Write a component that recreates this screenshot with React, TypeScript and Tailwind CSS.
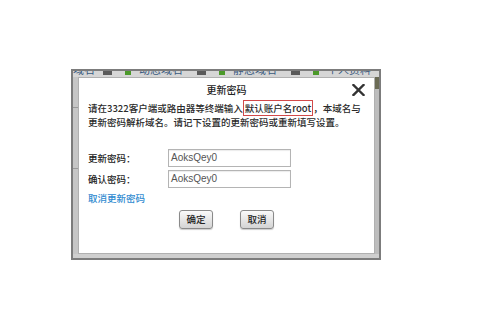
import React from 'react';

const cjk = "font-['Noto_Sans_CJK_SC','Noto_Sans',sans-serif]";

const TabStrip = () => {
  const tabs = ['动态域名', '静态域名', '个人资料'];
  return (
    <div className="h-[6px] overflow-hidden bg-[#d6d6d6]">
      <div className={`flex items-center h-[14px] mt-[-9px] text-[11px] leading-[14px] text-[#3a5a80] ${cjk}`}>
        <span className="w-[22px] shrink-0 text-right">域名</span>
        {tabs.map((t) => (
          <React.Fragment key={t}>
            <span className="ml-[8px] w-[9px] h-[12px] bg-[#5a5a5a] shrink-0" />
            <span className="ml-[13px] w-[6px] h-[12px] bg-[#4c9a2a] shrink-0" />
            <span className="ml-[8px] w-[50px] shrink-0">{t}</span>
          </React.Fragment>
        ))}
        <span className="ml-[2px] w-[9px] h-[12px] bg-[#5a5a5a] shrink-0" />
      </div>
    </div>
  );
};

const CloseIcon = () => (
  <svg width="13" height="12" viewBox="0 0 13 12">
    <path d="M1.5 1 L11.5 11 M11.5 1 L1.5 11" stroke="#333" strokeWidth="2.4" strokeLinecap="square" />
  </svg>
);

const Field = ({ label }: { label: string }) => (
  <div className="flex items-center h-[18px]">
    <span className="w-[80px] text-[#222]">{label}</span>
    <div className="w-[123px] h-[18px] border border-[#b4b4b4] bg-white flex items-center px-[2px] shadow-[inset_0_1px_1px_rgba(0,0,0,0.08)]">
      <span className="font-['Liberation_Sans',sans-serif] text-[10px] text-[#555]">AoksQey0</span>
    </div>
  </div>
);

const Btn = ({ children }: { children: React.ReactNode }) => (
  <button className="w-[34px] h-[19px] rounded-[3px] border border-[#8a8a8a] bg-gradient-to-b from-[#fafafa] to-[#d4d4d4] text-[#222] text-[9.5px] leading-none flex items-center justify-center shadow-[0_1px_1px_rgba(0,0,0,0.2)]">
    {children}
  </button>
);

export default function App() {
  return (
    <div className="w-[480px] h-[320px] bg-white pt-[69px] pl-[71px]">
      <div className="w-[310px] h-[191px] border-2 border-[#7c7c7c] bg-[#cdcdcd] flex flex-col">
        <TabStrip />
        <div className="flex h-[177px]">
          <div className="w-[5px] bg-[#c6c6c6] flex flex-col">
            <div className="h-[30px]" />
            <div className="h-px bg-[#9a9a9a]" />
            <div className="h-[60px]" />
            <div className="h-px bg-[#9a9a9a]" />
          </div>
          <div className={`w-[297px] bg-white border border-[#b0b0b0] px-[9px] text-[9.5px] leading-[14px] font-medium text-[#2a2a2a] ${cjk}`}>
            <div className="flex items-center justify-between h-[20px] pt-[4px]">
              <div className="w-[13px]" />
              <span className="text-[10px] text-[#222]">更新密码</span>
              <CloseIcon />
            </div>
            <div className="mt-[3px]">
              <p>
                请在3322客户端或路由器等终端输入
                <span className="border border-[#d24a4a] px-px">默认账户名root</span>
                ，本域名与
              </p>
              <p>更新密码解析域名。请记下设置的更新密码或重新填写设置。</p>
            </div>
            <div className="mt-[20px] flex flex-col gap-[3px]">
              <Field label="更新密码：" />
              <Field label="确认密码：" />
            </div>
            <div className="mt-[3px] text-[#2f8ad0]">取消更新密码</div>
            <div className="mt-[5px] flex justify-center gap-[27px]">
              <Btn>确定</Btn>
              <Btn>取消</Btn>
            </div>
          </div>
          <div className="flex-1 bg-[#bdbdbd] flex flex-col">
            <div className="h-[12px] bg-[#6b6b55]" />
          </div>
        </div>
        <div className="flex-1 bg-[#cfcfcf]" />
      </div>
    </div>
  );
}
